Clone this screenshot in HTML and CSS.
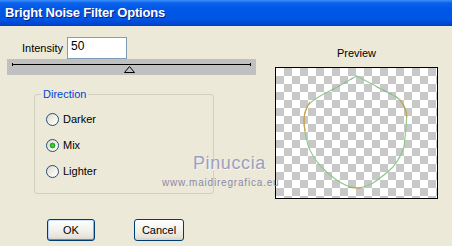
FILE: index.html
```html
<!DOCTYPE html>
<html lang="en">
  <head>
    <meta charset="UTF-8" />
    <meta name="viewport" content="width=device-width, initial-scale=1.0" />
    <title>Bright Noise Filter Options</title>
    <link rel="stylesheet" href="styles.css">
  </head>
  <body>
    <div class="window">
      <div class="titlebar">Bright Noise Filter Options</div>
      <div class="client">
        <div class="left">
          <div class="field-row">
            <label for="intensity">Intensity</label>
            <input class="num" id="intensity" type="text" value="50" />
          </div>
          <div class="slider">
            <div class="track"></div>
            <svg class="thumb" width="11" height="7" viewBox="0 0 11 7">
              <polygon points="5.5,0.5 10.5,6.5 0.5,6.5" fill="none" stroke="#000" stroke-width="1" />
            </svg>
          </div>
          <fieldset class="group">
            <legend>Direction</legend>
            <label class="radio-row"><input class="radio" type="radio" name="dir" />Darker</label>
            <label class="radio-row"><input class="radio" type="radio" name="dir" checked />Mix</label>
            <label class="radio-row"><input class="radio" type="radio" name="dir" />Lighter</label>
          </fieldset>
          <div class="buttons">
            <button class="btn default">OK</button>
            <button class="btn cancel">Cancel</button>
          </div>
        </div>
        <div class="right">
          <div class="preview-label">Preview</div>
          <div class="preview">
            <svg width="161" height="130" viewBox="0 0 161 130">
              <path class="outline" d="M80.7,8 C88,12 94,15 100.7,18.7 C110,24 119,27 124,32 C129,38 131,44 130.7,49 C130,60 129,70 128,79 C125,88 121,94 117,99 C110,106 103,111 97,115 C91,118 86,120 80.7,120 C73,119 66,116 60.7,112 C53,107 47,101 42,95 C36,87 32,80 30.7,72 C29,65 28,58 28,52 C28,46 30,41 32,37 C39,30 47,26 55.7,22 C64,18 73,12 80.7,8 Z" />
              <path class="grey" d="M55.7,22 C64,18 73,12 80.7,8" />
              <path class="grey" d="M100.7,18.7 C110,24 119,27 124,32" />
              <path class="orange" d="M34,34 C30,40 28,46 28,52 C28,56 28.5,60 29,63" />
              <path class="orange" d="M124,32 C128,37 130,42 130.7,49" />
              <path class="orange" d="M86,119.5 C83,120 82,120 80.7,120 C77,120 74,119.5 72,119" />
            </svg>
          </div>
        </div>
      </div>
      <div class="watermark">
        <div class="wm-name">Pinuccia</div>
        <div class="wm-url">www.maidiregrafica.eu</div>
      </div>
    </div>
  </body>
</html>
```

FILE: styles.css
```css
body {
  margin: 0;
  background-color: #ece9d8;
  font-family: "Liberation Sans", Arial, sans-serif;
  font-size: 11px;
  color: #000;
}
.window {
  position: relative;
  width: 452px;
  height: 246px;
  overflow: hidden;
}
.titlebar {
  height: 26px;
  line-height: 25px;
  padding-left: 5px;
  color: #fff;
  font-weight: bold;
  font-size: 13px;
  letter-spacing: -0.2px;
  text-shadow: 1px 1px #0a1f8a;
  background: linear-gradient(
    to bottom,
    #3d8ff8 0,
    #0b62ec 3px,
    #0058e6 8px,
    #0055e2 19px,
    #0049d6 23px,
    #003fc2 26px
  );
}
.client {
  display: flex;
}
.left {
  width: 275px;
  display: flex;
  flex-direction: column;
}
.field-row {
  display: flex;
  align-items: center;
  margin-top: 11px;
  padding-left: 22px;
}
.field-row label {
  width: 45px;
}
.num {
  box-sizing: border-box;
  width: 60px;
  height: 22px;
  margin: 0;
  padding: 0 2px 4px 3px;
  border: 1px solid #7f9db9;
  background: #fff;
  font-family: "Liberation Sans", Arial, sans-serif;
  font-size: 12px;
  color: #000;
  outline: none;
}
.slider {
  position: relative;
  width: 249px;
  height: 16px;
  margin-left: 7px;
  padding: 5px 0 0 5px;
  box-sizing: border-box;
  background-color: #c0c0c0;
}
.track {
  position: relative;
  width: 239px;
  height: 1px;
  background-color: #000;
}
.track::before,
.track::after {
  content: "";
  position: absolute;
  top: -1px;
  width: 1px;
  height: 3px;
  background-color: #000;
}
.track::before {
  left: 0;
}
.track::after {
  right: 0;
}
.thumb {
  position: absolute;
  left: 117px;
  top: 7px;
}
.group {
  box-sizing: border-box;
  width: 180px;
  margin: 13px 0 0 34px;
  padding: 0 0 9px 0;
  border: 1px solid #d0d0bf;
  border-radius: 3px;
}
.group legend {
  margin-left: 6px;
  padding: 0 2px;
  line-height: 13px;
  color: #0046d5;
}
.radio-row {
  display: flex;
  align-items: center;
  gap: 4px;
  height: 26px;
  padding-left: 11px;
}
.radio-row:first-of-type {
  margin-top: 5px;
}
.radio {
  appearance: none;
  width: 13px;
  height: 13px;
  margin: 0;
  border: 1px solid #1c5180;
  border-radius: 50%;
  background: linear-gradient(135deg, #dcd9ce 0%, #f4f3ee 60%, #fff 100%);
}
.radio:checked {
  background: radial-gradient(circle, #4ed94e 0, #21a121 2.5px, transparent 3.2px),
    linear-gradient(135deg, #dcd9ce 0%, #f4f3ee 60%, #fff 100%);
}
.buttons {
  display: flex;
  gap: 39px;
  margin: 25px 0 0 47px;
}
.btn {
  box-sizing: border-box;
  height: 22px;
  margin: 0;
  padding: 0;
  border: 1px solid #003c74;
  border-radius: 3px;
  background: linear-gradient(to bottom, #fff 0%, #f2f1ec 50%, #e6e3d8 85%, #d6d0c5 100%);
  font-family: "Liberation Sans", Arial, sans-serif;
  font-size: 11px;
  color: #000;
}
.btn.default {
  width: 48px;
  box-shadow: inset 0 1px 0 #cee7ff, inset 0 -1px 0 #6982ee, inset 1px 0 0 #bcd4f6, inset -1px 0 0 #89adf0;
}
.btn.cancel {
  width: 50px;
}
.right {
  width: 163px;
  display: flex;
  flex-direction: column;
}
.preview-label {
  margin-top: 21px;
  line-height: 13px;
  text-align: center;
}
.preview {
  margin-top: 7px;
  width: 163px;
  height: 132px;
  box-sizing: border-box;
  border: 1px solid #000;
  background: repeating-conic-gradient(#c8c8c8 0 25%, #fff 0 50%) 0 0 / 16px 16px;
}
.preview svg {
  display: block;
}
.outline {
  fill: none;
  stroke: #8fca8f;
  stroke-width: 1.2;
}
.grey {
  fill: none;
  stroke: #9aa8a8;
  stroke-width: 1;
  stroke-dasharray: 3 4;
}
.orange {
  fill: none;
  stroke: #d49a48;
  stroke-width: 1.2;
}
.watermark {
  position: absolute;
  left: 162px;
  top: 153px;
  color: #9e9ebe;
}
.wm-name {
  margin-left: 31px;
  font-size: 18px;
  line-height: 20px;
  letter-spacing: 0.6px;
  text-shadow: 1px 1px #f6f6fb;
}
.wm-url {
  margin-top: 4px;
  font-size: 10px;
  line-height: 12px;
  letter-spacing: 0.8px;
  color: #8a8aa8;
}
```
